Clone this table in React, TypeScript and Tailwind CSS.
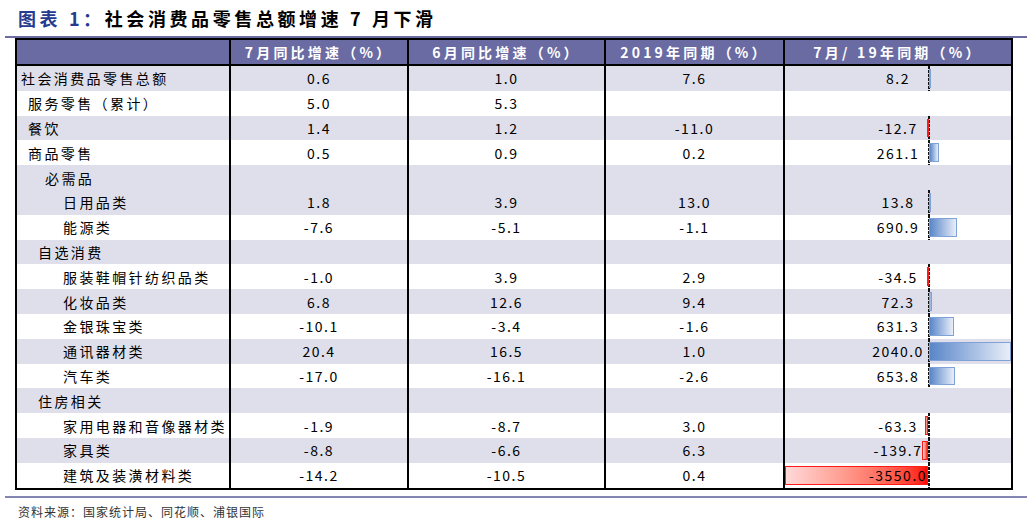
type Row = {
  label: string;
  pad: string;
  bg: string;
  a?: string;
  b?: string;
  c?: string;
  d?: number;
};

const L = "bg-[#dfdfeb]";
const W = "bg-white";

const rows: Row[] = [
  { label: "社会消费品零售总额", pad: "pl-[4px]", bg: L, a: "0.6", b: "1.0", c: "7.6", d: 8.2 },
  { label: "服务零售（累计）", pad: "pl-[11px]", bg: W, a: "5.0", b: "5.3" },
  { label: "餐饮", pad: "pl-[11px]", bg: L, a: "1.4", b: "1.2", c: "-11.0", d: -12.7 },
  { label: "商品零售", pad: "pl-[11px]", bg: W, a: "0.5", b: "0.9", c: "0.2", d: 261.1 },
  { label: "必需品", pad: "pl-[28px]", bg: L },
  { label: "日用品类", pad: "pl-[46px]", bg: L, a: "1.8", b: "3.9", c: "13.0", d: 13.8 },
  { label: "能源类", pad: "pl-[46px]", bg: W, a: "-7.6", b: "-5.1", c: "-1.1", d: 690.9 },
  { label: "自选消费", pad: "pl-[21px]", bg: L },
  { label: "服装鞋帽针纺织品类", pad: "pl-[46px]", bg: W, a: "-1.0", b: "3.9", c: "2.9", d: -34.5 },
  { label: "化妆品类", pad: "pl-[46px]", bg: L, a: "6.8", b: "12.6", c: "9.4", d: 72.3 },
  { label: "金银珠宝类", pad: "pl-[46px]", bg: W, a: "-10.1", b: "-3.4", c: "-1.6", d: 631.3 },
  { label: "通讯器材类", pad: "pl-[46px]", bg: L, a: "20.4", b: "16.5", c: "1.0", d: 2040.0 },
  { label: "汽车类", pad: "pl-[46px]", bg: W, a: "-17.0", b: "-16.1", c: "-2.6", d: 653.8 },
  { label: "住房相关", pad: "pl-[21px]", bg: L },
  { label: "家用电器和音像器材类", pad: "pl-[46px]", bg: W, a: "-1.9", b: "-8.7", c: "3.0", d: -63.3 },
  { label: "家具类", pad: "pl-[46px]", bg: L, a: "-8.8", b: "-6.6", c: "6.3", d: -139.7 },
  { label: "建筑及装潢材料类", pad: "pl-[46px]", bg: W, a: "-14.2", b: "-10.5", c: "0.4", d: -3550.0 },
];

const AXIS = 144;
const SCALE = 82 / 2040;

function BarCell({ v }: { v?: number }) {
  if (v === undefined) return <div className="h-full" />;
  const w = Math.abs(v) * SCALE;
  const neg = v < 0;
  return (
    <div className="relative h-full flex items-center justify-center">
      <div className="absolute top-0 bottom-0 left-[143px] w-[2px] bg-[repeating-linear-gradient(to_bottom,#111_0_3px,transparent_3px_4px)]" />
      {neg ? (
        <div
          className="absolute top-[3px] bottom-[3px] border border-[#ff1a1a] bg-gradient-to-r from-[#ffd9d9] to-[#ff0000]"
          style={{ left: AXIS - w - 1, width: w }}
        />
      ) : (
        <div
          className="absolute top-[3px] bottom-[3px] border border-[#7ea2d8] bg-gradient-to-r from-[#5a86c8] to-[#e9eef8]"
          style={{ left: AXIS, width: w }}
        />
      )}
      <span className="relative tracking-[1.5px]">{v.toFixed(1)}</span>
    </div>
  );
}

export default function App() {
  return (
    <div className="w-[1032px] h-[522px] bg-white text-black font-['Noto_Sans_CJK_SC',sans-serif] overflow-hidden">
      <div className="h-[36px] flex items-center pl-[18px] text-[18px] font-bold tracking-[3.6px]">
        <span className="text-[#263b8f]">图表 1：</span>
        <span>社会消费品零售总额增速 7 月下滑</span>
      </div>
      <div className="ml-[5px] w-[1022px] h-[2px] bg-[#6c6ca0]" />
      <div className="ml-[15px] w-[998px] border-2 border-black text-[14px]">
        <div className="grid grid-cols-[214px_178px_197px_179px_226px] h-[26px] bg-[#6a6ba3] border-b-2 border-black text-white font-bold tracking-[3.2px]">
          <div className="border-r-2 border-black" />
          <div className="border-r-2 border-black flex items-center justify-center">7月同比增速（%）</div>
          <div className="border-r-2 border-black flex items-center justify-center">6月同比增速（%）</div>
          <div className="border-r-2 border-black flex items-center justify-center">2019年同期（%）</div>
          <div className="flex items-center justify-center">7月/ 19年同期（%）</div>
        </div>
        {rows.map((r) => (
          <div
            key={r.label}
            className={`grid grid-cols-[214px_178px_197px_179px_226px] h-[24.8px] leading-none ${r.bg}`}
          >
            <div className={`border-r-2 border-black flex items-center tracking-[2.4px] whitespace-nowrap ${r.pad}`}>
              {r.label}
            </div>
            <div className="border-r-2 border-black flex items-center justify-center tracking-[1.5px]">{r.a}</div>
            <div className="border-r-2 border-black flex items-center justify-center tracking-[1.5px]">{r.b}</div>
            <div className="border-r-2 border-black flex items-center justify-center tracking-[1.5px]">{r.c}</div>
            <BarCell v={r.d} />
          </div>
        ))}
      </div>
      <div className="mt-[6px] ml-[5px] w-[1022px] h-[2px] bg-[#8585b3]" />
      <div className="pl-[18px] pt-[5px] text-[12px] tracking-[1px] text-[#333]">
        资料来源：国家统计局、同花顺、浦银国际
      </div>
    </div>
  );
}
